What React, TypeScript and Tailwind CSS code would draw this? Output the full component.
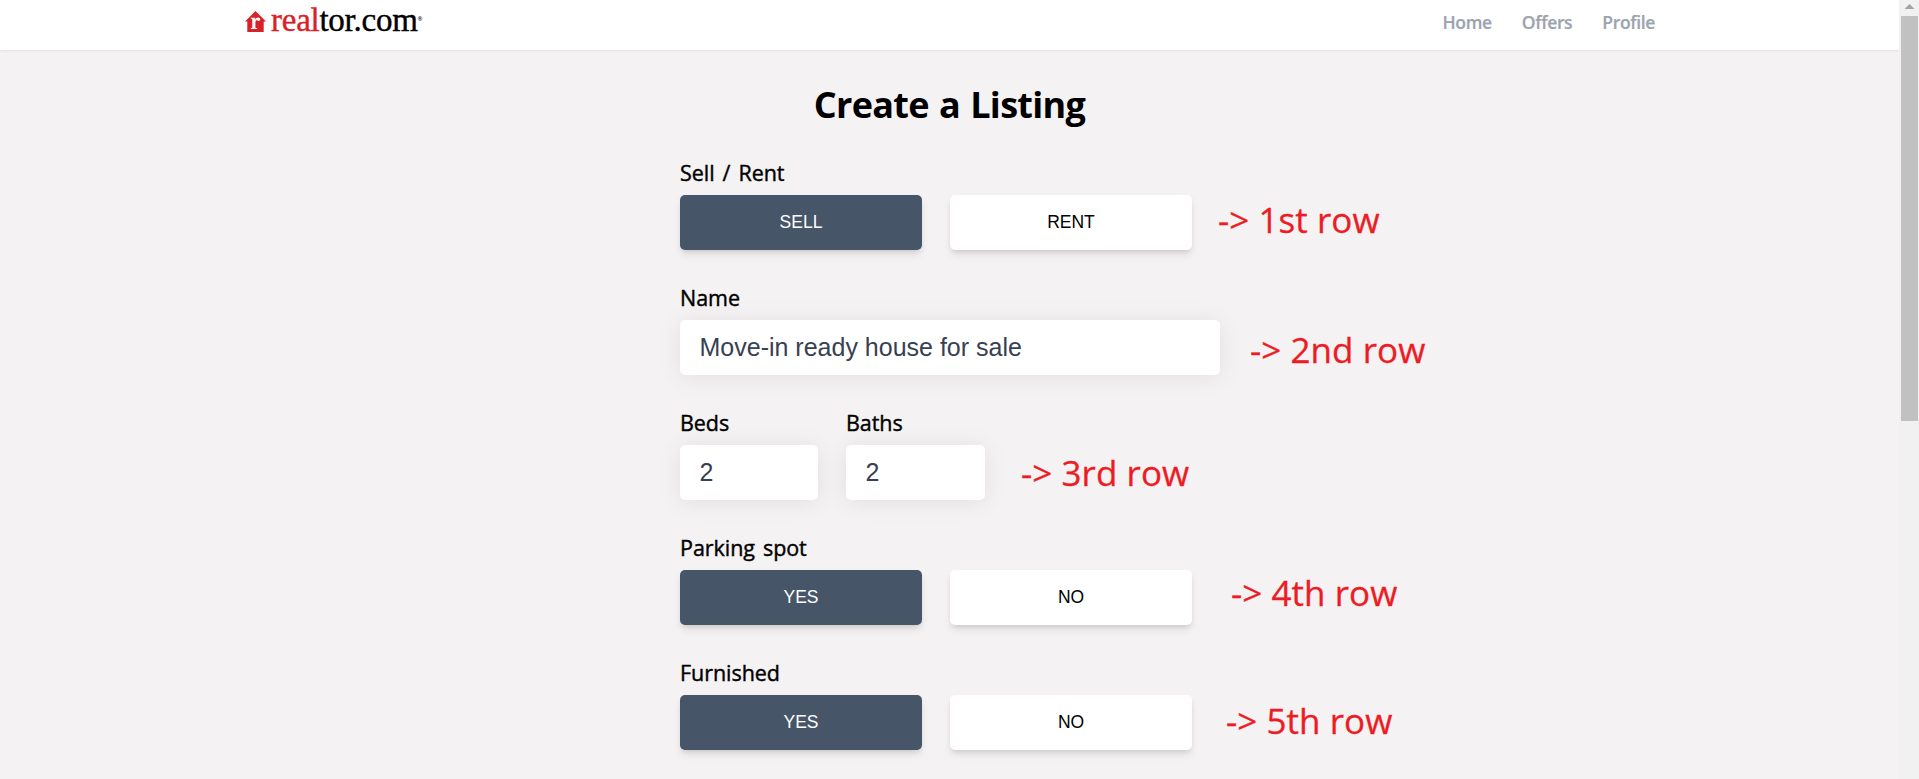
import type { ReactNode } from "react";

const sans = "font-['Open_Sans','Noto_Sans',sans-serif]";
const arial = "font-['Liberation_Sans',Arial,sans-serif]";

function Logo() {
  return (
    <a href="#" className="flex h-[44px] items-start">
      <svg width="22" height="22" viewBox="0 0 22 22" className="mt-[11px] ml-[245px]" aria-hidden="true">
        <path d="M10.500 0 21 10.500h-2.300V21H2.300V10.500H0z" fill="#d92228" />
        <path
          d="M5.800 6.800h4.400v2c.7-1.500 1.700-2.300 3-2.300 1.200 0 2 .7 2 1.800 0 1-.7 1.700-1.600 1.700-.9 0-1.400-.5-1.500-1.300-1 .4-1.700 1.500-1.700 3.100v4.300c0 .7.3 1 1.700 1.100v.9H5.800v-.9c1.100-.1 1.500-.4 1.500-1.100V8.900c0-.8-.4-1.100-1.500-1.200z"
          fill="#fff"
        />
      </svg>
      <span className="ml-[4px] mt-[2px] font-['Liberation_Serif',serif] text-[33px] leading-[37px] tracking-[-0.25px] text-black [-webkit-text-stroke:0.4px]">
        <span className="text-[#d92228]">real</span>tor.com
      </span>
      <span className="mt-[14px] text-[6px] leading-[10px] text-black">®</span>
    </a>
  );
}

function Header() {
  return (
    <header className="flex h-[50px] w-full justify-between bg-white shadow-[0_1px_3px_rgba(0,0,0,0.08)]">
      <Logo />
      <nav className={`${sans} mr-[244px] flex gap-[30px] pt-[9px] text-[17.5px] leading-[26px] font-semibold tracking-[-0.35px] text-[#9ca3af] [-webkit-text-stroke:0.2px]`}>
        <a href="#">Home</a>
        <a href="#">Offers</a>
        <a href="#">Profile</a>
      </nav>
    </header>
  );
}

function Field({ label, children }: { label: string; children: ReactNode }) {
  return (
    <div className="h-[125px]">
      <p className={`${sans} h-[37px] text-[21.5px] leading-[30px] tracking-[-0.05px] text-black [word-spacing:2.5px] [-webkit-text-stroke:0.4px]`}>{label}</p>
      {children}
    </div>
  );
}

function Toggle({ options }: { options: [string, string] }) {
  return (
    <div className={`${arial} flex gap-[28px] text-[17.5px]`}>
      <button className="h-[55px] w-[242px] rounded-[5px] bg-[#475569] text-white shadow-[0_5px_8px_-1px_rgba(0,0,0,0.1),0_3px_5px_-2px_rgba(0,0,0,0.1)]">
        {options[0]}
      </button>
      <button className="h-[55px] w-[242px] rounded-[5px] bg-white text-black shadow-[0_5px_8px_-1px_rgba(0,0,0,0.1),0_3px_5px_-2px_rgba(0,0,0,0.1)]">
        {options[1]}
      </button>
    </div>
  );
}

function Input({ value, width }: { value: string; width: string }) {
  return (
    <input
      readOnly
      value={value}
      className={`${arial} ${width} block h-[55px] rounded-[5px] bg-white px-[19.5px] text-[25px] text-[#374151] shadow-[0_2px_25px_rgba(0,0,0,0.08)] outline-none`}
    />
  );
}

function Note({ place, children }: { place: string; children: ReactNode }) {
  return (
    <span className={`${sans} ${place} absolute text-[35px] leading-[48px] tracking-[0.05px] whitespace-nowrap text-[#ed1c24] [-webkit-text-stroke:0.3px]`}>
      {children}
    </span>
  );
}

function Scrollbar() {
  return (
    <div className="flex h-full w-[20px] shrink-0 flex-col bg-[#f1f1f1]">
      <svg width="20" height="16" viewBox="0 0 20 16" aria-hidden="true">
        <path d="M5.500 9 10.500 4l5 5z" fill="#a3a3a3" />
      </svg>
      <div className="ml-[2px] h-[405px] w-[17px] bg-[#c1c1c1]" />
    </div>
  );
}

export default function App() {
  return (
    <div className="relative flex h-[779px] w-[1919px] overflow-hidden bg-[#f4f2f3]">
      <div className="h-full w-[1899px]">
        <Header />
        <h1 className={`${sans} mt-[31px] h-[77px] text-center text-[36px] leading-[48px] font-bold tracking-[-0.7px] text-black [word-spacing:1.5px]`}>
          Create a Listing
        </h1>
        <main className="ml-[680px] w-[540px]">
          <Field label="Sell / Rent">
            <Toggle options={["SELL", "RENT"]} />
          </Field>
          <Field label="Name">
            <Input value="Move-in ready house for sale" width="w-[540px]" />
          </Field>
          <div className="flex gap-[28px]">
            <Field label="Beds">
              <Input value="2" width="w-[138px]" />
            </Field>
            <Field label="Baths">
              <Input value="2" width="w-[139px]" />
            </Field>
          </div>
          <Field label="Parking spot">
            <Toggle options={["YES", "NO"]} />
          </Field>
          <Field label="Furnished">
            <Toggle options={["YES", "NO"]} />
          </Field>
        </main>
      </div>
      <Scrollbar />
      <Note place="left-[1218px] top-[196px]">-&gt; 1st row</Note>
      <Note place="left-[1250px] top-[326px]">-&gt; 2nd row</Note>
      <Note place="left-[1021px] top-[449px]">-&gt; 3rd row</Note>
      <Note place="left-[1231px] top-[569px]">-&gt; 4th row</Note>
      <Note place="left-[1226px] top-[697px]">-&gt; 5th row</Note>
    </div>
  );
}
